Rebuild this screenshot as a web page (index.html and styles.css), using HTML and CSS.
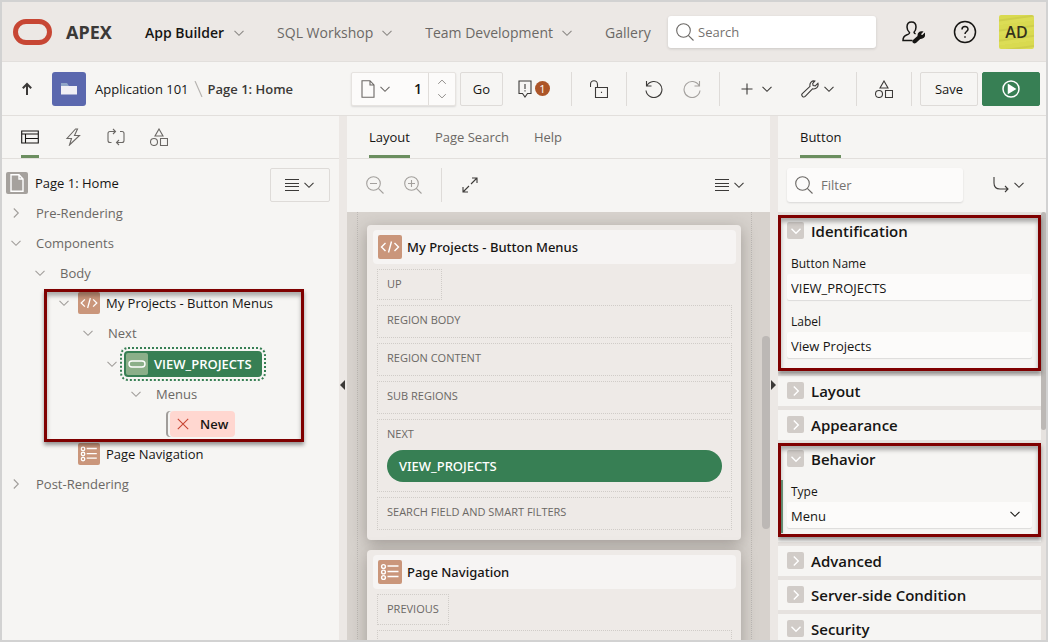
FILE: index.html
```html
<!DOCTYPE html>
<html lang="en">
<head>
<meta charset="utf-8">
<title>Page 1: Home - App Builder</title>
<link rel="stylesheet" href="styles.css">
</head>
<body>
<svg class="sprite" aria-hidden="true">
  <symbol id="chev" viewBox="0 0 12 12"><path d="M1.500 3.800 6 8.300l4.500-4.500"/></symbol>
  <symbol id="chev-right" viewBox="0 0 12 12"><path d="M3.800 1.500 8.300 6l-4.500 4.500"/></symbol>
  <symbol id="search" viewBox="0 0 18 18"><circle cx="7.500" cy="7.500" r="6.800"/><path d="m12.300 12.300 5.200 5.200"/></symbol>
  <symbol id="shapes" viewBox="0 0 18 18"><path d="M9 1 13 8H5zM10.500 10.500h7v7h-7z"/><circle cx="4" cy="14" r="3.500"/></symbol>
  <symbol id="code" viewBox="0 0 24 24"><path d="m7.500 8-4 4 4 4M16.500 8l4 4-4 4M13.500 6.500l-3 11"/></symbol>
  <symbol id="list" viewBox="0 0 24 24"><circle cx="5.500" cy="6.500" r="1.900"/><circle cx="5.500" cy="12" r="1.900"/><circle cx="5.500" cy="17.500" r="1.900"/><path d="M9.500 6h11M9.500 11.500h11M9.500 16.500h11"/></symbol>
  <symbol id="lines" viewBox="0 0 14 12"><path d="M0 .5h14M0 4.500h14M0 7.500h14M0 11.500h14"/></symbol>
  <symbol id="wrench" viewBox="0 0 18 18"><path d="M13.800 1C11 .4 8.300 2.800 9 6.300L1.300 13.600c-1.600 1.700 1 4.500 2.900 2.800l7.300-7.500c3.500.8 6.500-2 5.400-5.700l-2.600 2.600-2.200-.3-.4-2.100zM3 15h.1"/></symbol>
  <symbol id="doc" viewBox="0 0 14 18"><path d="M1 .7h8l4 4.300v12.300H1zM9 .7V5h4"/></symbol>
</svg>

<header class="topbar">
  <svg class="logo" viewBox="0 0 40 26" role="img" aria-label="Oracle"><rect x="2.500" y="2.500" width="34" height="21" rx="10.500"/></svg>
  <span class="brand">APEX</span>
  <nav class="nav">
    <a href="#" class="current">App Builder <svg class="i12"><use href="#chev"/></svg></a>
    <a href="#">SQL Workshop <svg class="i12"><use href="#chev"/></svg></a>
    <a href="#">Team Development <svg class="i12"><use href="#chev"/></svg></a>
    <a href="#">Gallery</a>
  </nav>
  <label class="search"><svg class="i18"><use href="#search"/></svg><input type="search" placeholder="Search" aria-label="Search"></label>
  <button class="bare" aria-label="Administration"><svg class="i24 dark" viewBox="0 0 24 24"><path d="M10.500 2C7.500 2 6 4.300 6 7s1.500 4.700 2.500 5.500c0 1.500-.5 1.700-3 2.500C2.500 16 2 17.500 2 20.500h9.500M10.500 2c3 0 4.500 2.300 4.500 5 0 2.200-.9 4.200-2 5.200.2 1 .5 1.300 1.600 1.700"/><path class="solid" d="m12.500 20.500 4.800-4.200c-.4-2.700 1.500-4.500 3.700-4.200L19.200 14l.9 1.500 1.500.4 1.800-1.800c.4 2.600-1.700 4.400-4.400 4L14.500 22.500c-1.500 1-3-.8-2-2z"/></svg></button>
  <button class="bare" aria-label="Help"><svg class="i24 dark" viewBox="0 0 24 24"><circle cx="12" cy="12" r="10.500"/><path d="M9 9.500c0-4 6-3.800 6-.3 0 2.300-3 2.400-3 4.800M12 16.200v1.600"/></svg></button>
  <button class="avatar">AD</button>
</header>

<div class="toolbar">
  <div class="crumbs">
    <a href="#" class="up" aria-label="Up"><svg viewBox="0 0 12 14"><path d="M6 13V2M1.800 6.200 6 2l4.200 4.200"/></svg></a>
    <span class="app-tile"><svg viewBox="0 0 18 14"><path fill="#8fa5c8" d="M1 1h6l2 3v3H1z"/><path fill="#f0eff5" d="M1 4h16v8.500H1z"/></svg></span>
    <a href="#">Application 101</a>
    <svg class="slash" viewBox="0 0 9 16"><path d="m1 0 7 16"/></svg>
    <strong>Page 1: Home</strong>
  </div>
  <div class="page-picker">
    <button class="pick" aria-label="Page finder"><svg class="doc"><use href="#doc"/></svg><svg class="i12"><use href="#chev"/></svg></button>
    <input type="text" value="1" aria-label="Page number">
    <div class="spin">
      <button aria-label="Previous page"><svg class="i10 flip"><use href="#chev"/></svg></button>
      <button aria-label="Next page"><svg class="i10"><use href="#chev"/></svg></button>
    </div>
  </div>
  <button class="btn go">Go</button>
  <div class="tools w-feedback"><button class="bare badge-btn" aria-label="Feedback"><svg class="i18" viewBox="0 0 18 18"><path d="M3 1h12v12.500h-3.500L9 17l-2.500-3.500H3zM9 4v5M9 10.200V11.500"/></svg><span class="badge">1</span></button></div>
  <div class="tools w-icon"><button class="bare" aria-label="Page unlocked"><svg class="i18" viewBox="0 0 18 18"><path d="M5.500 7.500h12v10h-12zM7.500 7.500V4.500c0-5-7-5-7 0V7M11.500 11.800v1.200"/></svg></button></div>
  <div class="tools w-undo">
    <button class="bare" aria-label="Undo"><svg class="i18" viewBox="0 0 18 18"><path d="M1.500 1v5h5M2 5.500a8 8 0 1 1-1 5"/></svg></button>
    <button class="bare faded" aria-label="Redo"><svg class="i18" viewBox="0 0 18 18"><path d="M16.500 1v5h-5M16 5.500a8 8 0 1 0 1 5"/></svg></button>
  </div>
  <div class="tools w-menus">
    <button class="bare" aria-label="Create"><svg class="i12" viewBox="0 0 12 12"><path d="M6 .5v11M.5 6h11"/></svg><svg class="i12"><use href="#chev"/></svg></button>
    <button class="bare tight" aria-label="Utilities"><svg class="i18"><use href="#wrench"/></svg><svg class="i12"><use href="#chev"/></svg></button>
  </div>
  <div class="tools w-icon"><button class="bare" aria-label="Shared components"><svg class="i18"><use href="#shapes"/></svg></button></div>
  <button class="btn save">Save</button>
  <button class="btn run" aria-label="Save and run page"><svg class="i18" viewBox="0 0 18 18"><circle cx="9" cy="9" r="8"/><path class="solid" d="m6.500 5 6.500 4-6.500 4z"/></svg></button>
</div>

<main class="panes">
  <section class="pane">
    <div class="tabs icon-tabs">
      <button class="active" aria-label="Rendering"><svg class="i18" viewBox="0 0 18 18"><path d="M.7 3h16.600v12H.7zM.7 6h16.600M4.500 6v9M4.500 10.500h12.800"/></svg></button>
      <button aria-label="Dynamic actions"><svg class="i18" viewBox="0 0 18 18"><path d="M11.500 1 3 10.500h4.500l-2 6.500L15.500 7.500h-5L13.500 1z"/></svg></button>
      <button aria-label="Processing"><svg class="i18" viewBox="0 0 18 18"><path d="M4.500 14.500H3c-1.500 0-2-1-2-2v-7c0-1.500 1-2 2-2h5M6 1l2.500 2.500L6 6M13 3.500h2c1.500 0 2 .9 2 2v7c0 1.500-1 2-2 2h-5M12 12l-2.500 2.500L12 17"/></svg></button>
      <button aria-label="Shared components"><svg class="i18"><use href="#shapes"/></svg></button>
    </div>
    <div class="tree-area">
      <ul class="tree">
        <li><div class="row root"><span class="tile gray"><svg class="doc"><use href="#doc"/></svg></span><span class="name">Page 1: Home</span></div></li>
        <li><div class="row"><svg class="tw"><use href="#chev-right"/></svg><span>Pre-Rendering</span></div></li>
        <li><div class="row"><svg class="tw"><use href="#chev"/></svg><span>Components</span></div>
          <ul>
            <li><div class="row"><svg class="tw"><use href="#chev"/></svg><span>Body</span></div>
              <ul>
                <li class="marked"><div class="row item"><svg class="tw"><use href="#chev"/></svg><span class="tile"><svg><use href="#code"/></svg></span><span class="name">My Projects - Button Menus</span></div>
                  <ul>
                    <li><div class="row"><svg class="tw"><use href="#chev"/></svg><span>Next</span></div>
                      <ul>
                        <li><div class="row selected"><svg class="tw"><use href="#chev"/></svg><span class="pill"><span class="tile green"><svg viewBox="0 0 22 22"><rect x="3" y="8" width="16" height="6" rx="3"/></svg></span>VIEW_PROJECTS</span></div>
                          <ul>
                            <li><div class="row"><svg class="tw"><use href="#chev"/></svg><span>Menus</span></div>
                              <ul>
                                <li><div class="row new"><span class="error-pill"><svg class="i12" viewBox="0 0 12 12"><path d="m.8.8 10.400 10.400M11.200.8.800 11.200"/></svg>New</span></div></li>
                              </ul>
                            </li>
                          </ul>
                        </li>
                      </ul>
                    </li>
                  </ul>
                </li>
                <li><div class="row item"><span class="tw"></span><span class="tile"><svg><use href="#list"/></svg></span><span class="name">Page Navigation</span></div></li>
              </ul>
            </li>
          </ul>
        </li>
        <li><div class="row"><svg class="tw"><use href="#chev-right"/></svg><span>Post-Rendering</span></div></li>
      </ul>
      <button class="btn menu" aria-label="Tree menu"><svg class="lines"><use href="#lines"/></svg><svg class="i12"><use href="#chev"/></svg></button>
    </div>
  </section>

  <div class="splitter"><svg viewBox="0 0 5 10"><path d="M5 0v10L0 5z"/></svg></div>

  <section class="pane">
    <div class="tabs">
      <button class="active">Layout</button>
      <button>Page Search</button>
      <button>Help</button>
    </div>
    <div class="subbar">
      <button class="bare faded" aria-label="Zoom out"><svg class="i18" viewBox="0 0 18 18"><circle cx="7.500" cy="7.500" r="6.800"/><path d="m12.300 12.300 5.200 5.200M4 7.500h7"/></svg></button>
      <button class="bare faded" aria-label="Zoom in"><svg class="i18" viewBox="0 0 18 18"><circle cx="7.500" cy="7.500" r="6.800"/><path d="m12.300 12.300 5.200 5.200M4 7.500h7M7.500 4v7"/></svg></button>
      <span class="sep"></span>
      <button class="bare" aria-label="Expand"><svg class="i16" viewBox="0 0 16 16"><path d="M10 1h5v5M15 1 9 7M6 15H1v-5M1 15l6-6"/></svg></button>
      <button class="bare tight end" aria-label="Layout menu"><svg class="lines"><use href="#lines"/></svg><svg class="i12"><use href="#chev"/></svg></button>
    </div>
    <div class="canvas">
      <div class="sheet">
        <article class="region">
          <header><span class="tile"><svg><use href="#code"/></svg></span>My Projects - Button Menus</header>
          <div class="slot short">UP</div>
          <div class="slot">REGION BODY</div>
          <div class="slot">REGION CONTENT</div>
          <div class="slot">SUB REGIONS</div>
          <div class="slot">NEXT<button class="page-button">VIEW_PROJECTS</button></div>
          <div class="slot">SEARCH FIELD AND SMART FILTERS</div>
        </article>
        <article class="region">
          <header><span class="tile"><svg><use href="#list"/></svg></span>Page Navigation</header>
          <div class="slot short">PREVIOUS</div>
          <div class="slot"></div>
        </article>
      </div>
      <span class="thumb"></span>
    </div>
  </section>

  <div class="splitter"><svg viewBox="0 0 5 10"><path d="M0 0v10l5-5z"/></svg></div>

  <section class="pane">
    <div class="tabs props-tabs"><button class="active">Button</button></div>
    <div class="subbar filterbar">
      <label class="filter"><svg class="i18"><use href="#search"/></svg><input type="search" placeholder="Filter" aria-label="Filter properties"></label>
      <button class="bare tight end" aria-label="Go to group"><svg class="i16" viewBox="0 0 16 16"><path d="M1 0v6c0 4 2 6 6 6h8M12 9l3 3-3 3"/></svg><svg class="i12"><use href="#chev"/></svg></button>
    </div>
    <div class="props">
      <div class="groups">
        <section class="group marked">
          <button class="group-head"><span class="tog"><svg><use href="#chev"/></svg></span>Identification</button>
          <div class="fields">
            <div class="field"><label for="bname">Button Name</label><input id="bname" type="text" value="VIEW_PROJECTS"></div>
            <div class="field"><label for="blabel">Label</label><input id="blabel" type="text" value="View Projects"></div>
          </div>
        </section>
        <section class="group"><button class="group-head"><span class="tog"><svg><use href="#chev-right"/></svg></span>Layout</button></section>
        <section class="group"><button class="group-head"><span class="tog"><svg><use href="#chev-right"/></svg></span>Appearance</button></section>
        <section class="group marked changed-group">
          <button class="group-head"><span class="tog"><svg><use href="#chev"/></svg></span>Behavior</button>
          <div class="fields">
            <div class="field changed"><label for="btype">Type</label><select id="btype"><option>Menu</option></select><svg class="i12"><use href="#chev"/></svg></div>
          </div>
        </section>
        <section class="group"><button class="group-head"><span class="tog"><svg><use href="#chev-right"/></svg></span>Advanced</button></section>
        <section class="group"><button class="group-head"><span class="tog"><svg><use href="#chev-right"/></svg></span>Server-side Condition</button></section>
        <section class="group"><button class="group-head"><span class="tog"><svg><use href="#chev"/></svg></span>Security</button></section>
      </div>
      <span class="thumb"></span>
    </div>
  </section>
</main>
</body>
</html>
```

FILE: styles.css
```css
*, *::before, *::after { box-sizing: border-box; }
body {
  margin: 0;
  height: 100vh;
  display: flex;
  flex-direction: column;
  overflow: hidden;
  border: 2px solid #d2d2d2;
  background: #f6f5f3;
  color: #161513;
  font: 13px/18px "Open Sans", "Noto Sans", sans-serif;
}
button, input, select { font: inherit; color: inherit; margin: 0; padding: 0; border: 0; background: none; }
input, select { min-width: 0; outline: 0; }
input::placeholder { color: #75726f; opacity: 1; }
a { color: inherit; text-decoration: none; }
ul { list-style: none; margin: 0; padding: 0; }
svg { display: block; flex: none; fill: none; stroke: currentColor; stroke-width: 1.1; }
.sprite { display: none; }
.i10 { width: 10px; height: 10px; }
.i12 { width: 12px; height: 12px; }
.i16 { width: 16px; height: 16px; }
.i18 { width: 18px; height: 18px; }
.i24 { width: 24px; height: 24px; }
.doc { width: 14px; height: 18px; }
.lines { width: 14px; height: 12px; }
.solid { fill: currentColor; }
.flip { transform: rotate(180deg); }
.dark { stroke-width: 1.5; }
.bare { display: flex; align-items: center; gap: 8px; color: #3c3a38; }
.bare.tight { gap: 4px; }
.faded { color: #a3a09d; }

/* top bar */
.topbar {
  flex: none;
  display: flex;
  align-items: center;
  height: 60px;
  padding: 0 12px 0 11px;
  background: #ece8e5;
  border-bottom: 1px solid #e2dfdc;
}
.logo { width: 40px; height: 26px; stroke: #c74634; stroke-width: 5; }
.brand { margin-left: 13px; width: 79px; font: bold 18px/24px "Noto Sans", sans-serif; color: #3b3937; }
.nav { display: flex; flex: 1; padding-top: 2px; font-size: 14px; color: #6b6865; }
.nav a { display: flex; align-items: center; gap: 8px; margin-right: 32px; white-space: nowrap; }
.nav .current { color: #161513; font-weight: 600; gap: 9px; }
.nav svg { color: #8b8885; }
.nav a:last-child { margin-right: 0; }
.search, .filter { display: flex; align-items: center; gap: 4px; background: #fff; border-radius: 3px; color: #6b6865; box-shadow: 0 1px 3px rgba(0, 0, 0, .14); }
.search { width: 208px; height: 32px; padding: 0 8px; margin-right: 25px; }
.search input, .filter input { flex: 1; }
.topbar .bare { color: #161513; margin-right: 28px; }
.topbar .bare + .bare { margin-right: 22px; }
.avatar { width: 35px; height: 34px; border-radius: 2px; font-size: 16px; font-weight: 600; color: #35321c; background: repeating-linear-gradient(172deg, #d9da50 0 4px, #cfcf4b 5px 6px, #dcdd55 7px 10px); }

/* toolbar */
.toolbar { flex: none; display: flex; align-items: center; height: 54px; padding-right: 6px; border-bottom: 1px solid #e2dfdc; }
.crumbs { flex: 1; display: flex; align-items: center; white-space: nowrap; }
.crumbs strong { font-weight: 600; color: #3b3937; }
.up { display: flex; justify-content: center; width: 50px; }
.up svg { width: 12px; height: 14px; stroke-width: 2; color: #3b3937; }
.app-tile { display: grid; place-items: center; width: 34px; height: 34px; margin-right: 9px; border-radius: 3px; background: #5b68ae; }
.app-tile svg { width: 18px; height: 14px; stroke: none; }
.slash { width: 9px; height: 16px; margin: 0 5px; color: #b5b2af; }
.page-picker { display: flex; width: 105px; height: 34px; border: 1px solid #e6e3e0; border-radius: 2px; background: #fcfbfa; box-shadow: 0 1px 2px rgba(0, 0, 0, .12); }
.pick { display: flex; align-items: center; gap: 4px; padding-left: 9px; color: #6b6865; }
.page-picker input { flex: 1; padding-right: 6px; text-align: right; font-size: 14px; font-weight: 600; }
.spin { display: flex; flex-direction: column; justify-content: space-evenly; width: 27px; border-left: 1px solid #e0ddda; color: #85827f; }
.spin button { display: grid; place-items: center; }
.btn { flex: none; height: 34px; border: 1px solid #dedbd8; border-radius: 2px; }
.go { width: 43px; margin-left: 4px; }
.save { width: 58px; margin: 0 4px 0 8px; }
.run { display: grid; place-items: center; width: 58px; border-color: #377f54; background: #377f54; color: #fff; }
.run svg { stroke-width: 1.5; }
.tools { flex: none; display: flex; align-items: center; justify-content: center; height: 34px; border-right: 1px solid #dedbd8; }
.w-feedback { width: 69px; padding-right: 8px; }
.w-icon { width: 55px; }
.w-undo { width: 93px; gap: 20px; }
.w-menus { width: 137px; gap: 28px; }
.badge-btn { gap: 1px; }
.badge { width: 15px; height: 15px; border-radius: 8px; background: #ac5528; color: #fff; font-size: 11px; line-height: 15px; }

/* panes */
.panes { flex: 1; min-height: 0; display: grid; grid-template-columns: 337fr 8px 423fr 8px 268fr; }
.pane { display: flex; flex-direction: column; min-width: 0; min-height: 0; }
.splitter { display: flex; align-items: center; background: #ece8e5; }
.splitter svg { width: 5px; height: 10px; margin: 14px 0 0 1px; fill: #3b3937; stroke: none; }
.tabs { flex: none; display: flex; gap: 25px; height: 43px; padding-left: 22px; border-bottom: 1px solid #e2dfdc; color: #6b6865; }
.tabs button { border-bottom: 3px solid transparent; padding-top: 3px; }
.tabs .active { color: #161513; border-color: #6b8e5f; }
.icon-tabs { padding-left: 19px; }
.icon-tabs svg { margin: 0 auto; }
.subbar { flex: none; display: flex; align-items: center; height: 53px; padding: 0 25px 2px 19px; }
.subbar .bare { margin-right: 20px; }
.subbar .end { margin: 0 0 0 auto; }
.sep { width: 1px; height: 34px; margin: 0 20px 0 -1px; background: #dedbd8; }
.tile { flex: none; display: grid; place-items: center; width: 22px; height: 22px; border-radius: 2px; background: #ca967b; color: #fff; }
.tile svg { width: 22px; height: 22px; stroke-width: 1.4; }
.tile.gray { background: #a5a19d; }
.tile.gray svg { width: 14px; height: 18px; }
.tile.green { background: #8baf89; }

/* component tree */
.tree-area { flex: 1; display: flex; align-items: flex-start; padding: 9px 9px 0 2px; }
.tree { flex: 1; min-width: 0; color: #6b6865; white-space: nowrap; }
.tree ul { padding-left: 24px; }
.row { display: flex; align-items: center; gap: 8px; height: 30px; }
.row .name { color: #161513; }
.tw { width: 24px; height: 12px; color: #a09d9a; }
.root { padding-left: 2px; gap: 7px; }
.item { gap: 2px; }
.item .name { margin-left: 4px; }
.selected { gap: 0; height: 31px; }
.pill {
  display: flex; align-items: center; gap: 6px; height: 26px; padding: 0 10px 0 2px;
  border-radius: 4px; background: #377f54; color: #fff; font-weight: 600;
  outline: 2px dotted #377f54; outline-offset: 2px;
}
.new { padding-left: 22px; }
.error-pill { display: flex; align-items: center; gap: 11px; height: 26px; padding: 0 7px; border-radius: 4px; background: #ffd7d0; color: #161513; font-weight: 600; box-shadow: -2px 0 0 0 #f6f5f3, -4px 0 0 0 #a09d9a; }
.error-pill svg { color: #c74634; }
.menu { display: flex; align-items: center; justify-content: center; gap: 4px; width: 60px; color: #3c3a38; }

/* highlight frames */
.marked { position: relative; }
.marked::after {
  content: "";
  position: absolute;
  z-index: 2;
  pointer-events: none;
  inset: -1px 0 1px;
  border: 3px solid #7f0000;
  box-shadow: 0 3px 4px rgba(0, 0, 0, .4), inset 0 4px 4px rgba(0, 0, 0, .3);
}
.tree .marked::after { width: 260px; inset: 1px auto -3px -8px; }
.changed-group::after { bottom: 5px; }

/* layout canvas */
.canvas { flex: 1; min-height: 0; overflow: hidden; position: relative; padding: 0 18px 0 10px; background: #d7d2cd; }
.sheet { min-height: 100%; display: flex; flex-direction: column; gap: 10px; padding: 13px 10px 0 9px; border: 1px dotted #bdb9b5; border-width: 0 1px; }
.region { padding: 5px 9px 10px 10px; border-radius: 4px; background: #eeeae7; box-shadow: 0 4px 16px rgba(60, 55, 50, .35); }
.region header { display: flex; align-items: center; gap: 5px; height: 34px; margin: 0 -4px 5px -4px; padding-left: 5px; border-radius: 4px; background: #f6f4f3; font-family: "Noto Sans", sans-serif; font-weight: 500; }
.region .tile, .region .tile svg { width: 24px; height: 24px; }
.slot { min-height: 33px; margin-bottom: 5px; padding: 5px 9px; border: 1px dotted #d0ccc8; color: #6b6865; font-size: 11px; line-height: 18px; }
.slot:last-child { margin-bottom: 0; }
.short { width: max-content; min-width: 65px; min-height: 31px; }
.page-button { display: block; width: 100%; height: 32px; margin: 7px 0 4px; padding-left: 12px; border-radius: 16px; background: #377f54; color: #fff; font-family: "Noto Sans", sans-serif; font-size: 13px; font-weight: 500; text-align: left; }
.thumb { position: absolute; border-radius: 4px; background: #bcb8b5; }
.canvas .thumb { right: 0; top: 29%; height: 45%; width: 8px; }

/* property editor */
.filterbar { padding: 0 21px 2px 9px; }
.filter { flex: 0 1 176px; min-width: 0; height: 34px; padding: 0 8px; gap: 8px; background: #fcfbfa; box-shadow: 0 1px 2px rgba(0, 0, 0, .12); }
.props { flex: 1; min-height: 0; position: relative; overflow: hidden; padding: 4px 5px 0 0; background: #e6e2df; }
.props .thumb { right: 0; top: 0; width: 5px; height: 51%; }
.groups { display: flex; flex-direction: column; gap: 4px; }
.group { background: #f6f5f3; }
.group:last-child { padding-bottom: 20px; }
.group-head { display: flex; align-items: center; gap: 7px; width: 100%; height: 30px; padding: 0 0 1px 9px; font-size: 15px; font-weight: 600; text-align: left; }
.tog { display: grid; place-items: center; width: 17px; height: 17px; border-radius: 2px; background: #d1ccc8; color: #fff; }
.tog svg { width: 12px; height: 12px; stroke-width: 1.4; }
.fields { display: flex; flex-direction: column; gap: 12px; padding: 8px 9px 14px; }
.field { position: relative; display: flex; flex-direction: column; font-size: 12px; }
.field label { padding-left: 4px; line-height: 20px; }
.field input, .field select { height: 26px; padding: 1px 4px 0; border-radius: 2px; appearance: none; background: #fcfbfa; font-size: 13px; box-shadow: 0 1px 1px rgba(0, 0, 0, .1); }
.field > svg { position: absolute; right: 11px; bottom: 8px; pointer-events: none; }
.changed::before { content: ""; position: absolute; left: -6px; top: -2px; bottom: -5px; width: 2px; background: #6f9a7d; }
```
